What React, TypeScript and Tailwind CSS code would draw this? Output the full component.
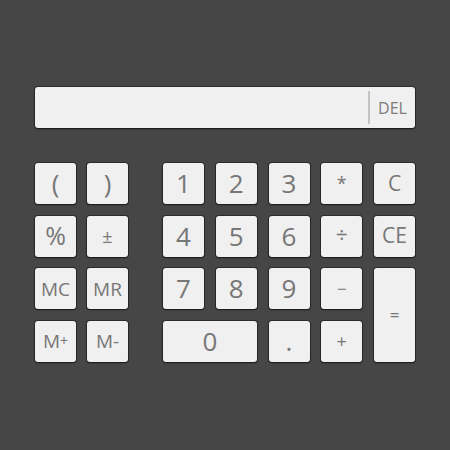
import React from "react";

type Key = {
  label: React.ReactNode;
  size: string;
};

const keyBase =
  "flex items-center justify-center rounded-[3px] bg-[#f0f0f0] text-[#777777] shadow-[0_0_0_1px_rgba(0,0,0,0.35),0_1px_2px_rgba(0,0,0,0.45)] select-none";

// memory / misc column on the left
const leftKeys: Key[] = [
  { label: "(", size: "text-[26px]" },
  { label: ")", size: "text-[26px]" },
  { label: "%", size: "text-[25px]" },
  { label: "±", size: "text-[18px]" },
  { label: "MC", size: "text-[19px]" },
  { label: "MR", size: "text-[19px]" },
  {
    label: (
      <span>
        M<span className="text-[14px] align-[2px]">+</span>
      </span>
    ),
    size: "text-[19px]",
  },
  { label: "M-", size: "text-[19px]" },
];

const Calculator: React.FC = () => {
  return (
    <div
      className="w-[450px] h-[450px] bg-[#464646] px-[35px] pt-[87px]"
      style={{ fontFamily: '"Open Sans", "Noto Sans", sans-serif' }}
    >
      {/* DISPLAY */}
      <div className="flex h-[41px] rounded-[3px] bg-[#f0f0f0] shadow-[0_0_0_1px_rgba(0,0,0,0.35),0_1px_2px_rgba(0,0,0,0.45)]">
        <div className="flex-1" />
        <div className="my-[4px] w-[2px] bg-[#c4c4c4]" />
        <div className="flex w-[45px] items-center justify-center text-[16px] text-[#7c7c7c]">
          DEL
        </div>
      </div>

      {/* KEYPAD */}
      <div className="mt-[35px] flex gap-[35px]">
        <div className="grid grid-cols-[41px_41px] auto-rows-[41px] gap-x-[11px] gap-y-[11.7px]">
          {leftKeys.map((k, i) => (
            <div key={i} className={`${keyBase} ${k.size}`}>
              {k.label}
            </div>
          ))}
        </div>

        <div className="grid grid-cols-[repeat(5,41px)] auto-rows-[41px] gap-x-[11.75px] gap-y-[11.7px]">
          <div className={`${keyBase} text-[26px]`}>1</div>
          <div className={`${keyBase} text-[26px]`}>2</div>
          <div className={`${keyBase} text-[26px]`}>3</div>
          <div className={`${keyBase} text-[18px]`}>*</div>
          <div className={`${keyBase} text-[21px]`}>C</div>

          <div className={`${keyBase} text-[26px]`}>4</div>
          <div className={`${keyBase} text-[26px]`}>5</div>
          <div className={`${keyBase} text-[26px]`}>6</div>
          <div className={`${keyBase} text-[21px]`}>÷</div>
          <div className={`${keyBase} text-[21px]`}>CE</div>

          <div className={`${keyBase} text-[26px]`}>7</div>
          <div className={`${keyBase} text-[26px]`}>8</div>
          <div className={`${keyBase} text-[26px]`}>9</div>
          <div className={`${keyBase} text-[17px]`}>−</div>
          <div className={`${keyBase} row-span-2 text-[17px]`}>=</div>

          <div className={`${keyBase} col-span-2 text-[26px]`}>0</div>
          <div className={`${keyBase} text-[26px]`}>.</div>
          <div className={`${keyBase} text-[18px]`}>+</div>
        </div>
      </div>
    </div>
  );
};

export default function App() {
  return <Calculator />;
}
